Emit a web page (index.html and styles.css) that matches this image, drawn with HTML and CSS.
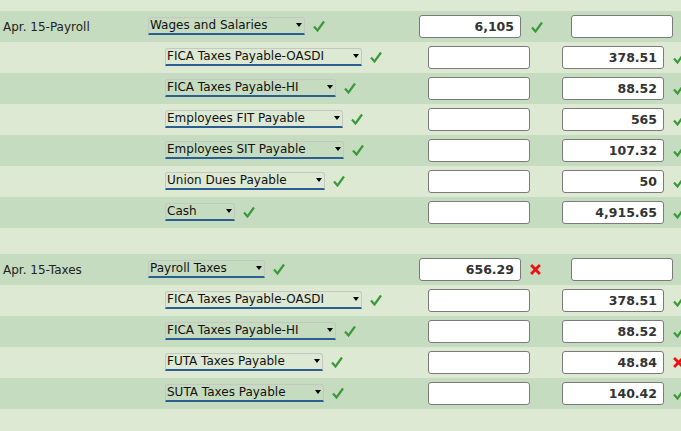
FILE: index.html
```html
<!DOCTYPE html>
<html>
<head>
<meta charset="utf-8">
<link rel="stylesheet" href="styles.css">
</head>
<body>
<div class="journal">
  <div class="row dark">
    <div class="label">Apr. 15-Payroll</div>
    <div class="acct"><span class="select"><span class="opt">Wages and Salaries</span><span class="arrow"></span></span><svg class="ok" viewBox="0 0 12 12"><path d="M1 6.5 L4.5 10.5 L11 1.5"/></svg></div>
    <div class="debit"><input class="amt" value="6,105" readonly><svg class="ok" viewBox="0 0 12 12"><path d="M1 6.5 L4.5 10.5 L11 1.5"/></svg></div>
    <div class="credit main"><input class="amt" value="" readonly></div>
  </div>
  <div class="row light sub">
    <div class="label"></div>
    <div class="acct"><span class="select"><span class="opt">FICA Taxes Payable-OASDI</span><span class="arrow"></span></span><svg class="ok" viewBox="0 0 12 12"><path d="M1 6.5 L4.5 10.5 L11 1.5"/></svg></div>
    <div class="debit"><input class="amt" value="" readonly></div>
    <div class="credit"><input class="amt" value="378.51" readonly><svg class="ok" viewBox="0 0 12 12"><path d="M1 6.5 L4.5 10.5 L11 1.5"/></svg></div>
  </div>
  <div class="row dark sub">
    <div class="label"></div>
    <div class="acct"><span class="select"><span class="opt">FICA Taxes Payable-HI</span><span class="arrow"></span></span><svg class="ok" viewBox="0 0 12 12"><path d="M1 6.5 L4.5 10.5 L11 1.5"/></svg></div>
    <div class="debit"><input class="amt" value="" readonly></div>
    <div class="credit"><input class="amt" value="88.52" readonly><svg class="ok" viewBox="0 0 12 12"><path d="M1 6.5 L4.5 10.5 L11 1.5"/></svg></div>
  </div>
  <div class="row light sub">
    <div class="label"></div>
    <div class="acct"><span class="select"><span class="opt">Employees FIT Payable</span><span class="arrow"></span></span><svg class="ok" viewBox="0 0 12 12"><path d="M1 6.5 L4.5 10.5 L11 1.5"/></svg></div>
    <div class="debit"><input class="amt" value="" readonly></div>
    <div class="credit"><input class="amt" value="565" readonly><svg class="ok" viewBox="0 0 12 12"><path d="M1 6.5 L4.5 10.5 L11 1.5"/></svg></div>
  </div>
  <div class="row dark sub">
    <div class="label"></div>
    <div class="acct"><span class="select"><span class="opt">Employees SIT Payable</span><span class="arrow"></span></span><svg class="ok" viewBox="0 0 12 12"><path d="M1 6.5 L4.5 10.5 L11 1.5"/></svg></div>
    <div class="debit"><input class="amt" value="" readonly></div>
    <div class="credit"><input class="amt" value="107.32" readonly><svg class="ok" viewBox="0 0 12 12"><path d="M1 6.5 L4.5 10.5 L11 1.5"/></svg></div>
  </div>
  <div class="row light sub">
    <div class="label"></div>
    <div class="acct"><span class="select"><span class="opt">Union Dues Payable</span><span class="arrow"></span></span><svg class="ok" viewBox="0 0 12 12"><path d="M1 6.5 L4.5 10.5 L11 1.5"/></svg></div>
    <div class="debit"><input class="amt" value="" readonly></div>
    <div class="credit"><input class="amt" value="50" readonly><svg class="ok" viewBox="0 0 12 12"><path d="M1 6.5 L4.5 10.5 L11 1.5"/></svg></div>
  </div>
  <div class="row dark sub">
    <div class="label"></div>
    <div class="acct"><span class="select"><span class="opt">Cash</span><span class="arrow"></span></span><svg class="ok" viewBox="0 0 12 12"><path d="M1 6.5 L4.5 10.5 L11 1.5"/></svg></div>
    <div class="debit"><input class="amt" value="" readonly></div>
    <div class="credit"><input class="amt" value="4,915.65" readonly><svg class="ok" viewBox="0 0 12 12"><path d="M1 6.5 L4.5 10.5 L11 1.5"/></svg></div>
  </div>
  <div class="spacer"></div>
  <div class="row dark">
    <div class="label">Apr. 15-Taxes</div>
    <div class="acct"><span class="select"><span class="opt">Payroll Taxes</span><span class="arrow"></span></span><svg class="ok" viewBox="0 0 12 12"><path d="M1 6.5 L4.5 10.5 L11 1.5"/></svg></div>
    <div class="debit"><input class="amt" value="656.29" readonly><svg class="bad" viewBox="0 0 10 10"><path d="M1 1 L9 9 M9 1 L1 9"/></svg></div>
    <div class="credit main"><input class="amt" value="" readonly></div>
  </div>
  <div class="row light sub">
    <div class="label"></div>
    <div class="acct"><span class="select"><span class="opt">FICA Taxes Payable-OASDI</span><span class="arrow"></span></span><svg class="ok" viewBox="0 0 12 12"><path d="M1 6.5 L4.5 10.5 L11 1.5"/></svg></div>
    <div class="debit"><input class="amt" value="" readonly></div>
    <div class="credit"><input class="amt" value="378.51" readonly><svg class="ok" viewBox="0 0 12 12"><path d="M1 6.5 L4.5 10.5 L11 1.5"/></svg></div>
  </div>
  <div class="row dark sub">
    <div class="label"></div>
    <div class="acct"><span class="select"><span class="opt">FICA Taxes Payable-HI</span><span class="arrow"></span></span><svg class="ok" viewBox="0 0 12 12"><path d="M1 6.5 L4.5 10.5 L11 1.5"/></svg></div>
    <div class="debit"><input class="amt" value="" readonly></div>
    <div class="credit"><input class="amt" value="88.52" readonly><svg class="ok" viewBox="0 0 12 12"><path d="M1 6.5 L4.5 10.5 L11 1.5"/></svg></div>
  </div>
  <div class="row light sub">
    <div class="label"></div>
    <div class="acct"><span class="select"><span class="opt">FUTA Taxes Payable</span><span class="arrow"></span></span><svg class="ok" viewBox="0 0 12 12"><path d="M1 6.5 L4.5 10.5 L11 1.5"/></svg></div>
    <div class="debit"><input class="amt" value="" readonly></div>
    <div class="credit"><input class="amt" value="48.84" readonly><svg class="bad" viewBox="0 0 10 10"><path d="M1 1 L9 9 M9 1 L1 9"/></svg></div>
  </div>
  <div class="row dark sub">
    <div class="label"></div>
    <div class="acct"><span class="select"><span class="opt">SUTA Taxes Payable</span><span class="arrow"></span></span><svg class="ok" viewBox="0 0 12 12"><path d="M1 6.5 L4.5 10.5 L11 1.5"/></svg></div>
    <div class="debit"><input class="amt" value="" readonly></div>
    <div class="credit"><input class="amt" value="140.42" readonly><svg class="ok" viewBox="0 0 12 12"><path d="M1 6.5 L4.5 10.5 L11 1.5"/></svg></div>
  </div>
</div>
</body>
</html>
```
FILE: styles.css
```css
html, body {
  margin: 0;
  padding: 0;
  overflow: hidden;
  background: #dde9d3;
}
body {
  font-family: "DejaVu Sans", Verdana, sans-serif;
  font-size: 12px;
  color: #222;
}
.journal {
  padding-top: 11px;
  width: 681px;
  overflow: hidden;
}
.row {
  display: flex;
  align-items: center;
  height: 31px;
}
.row.dark { background: #c6dcc0; }
.row.light { background: #dde9d3; }
.spacer { height: 26px; }
.label {
  width: 145px;
  padding-left: 3px;
  flex: none;
  white-space: nowrap;
}
.acct {
  width: 271px;
  flex: none;
  display: flex;
  align-items: center;
  position: relative;
  top: -1px;
}
.sub .acct { width: 254px; padding-left: 17px; }
.select {
  display: inline-flex;
  align-items: center;
  height: 15px;
  padding-left: 1px;
  border: 1px solid #c4c7c2;
  border-bottom: 2px solid #2a5f90;
  border-radius: 3px 3px 0 0;
  color: #111;
  white-space: nowrap;
  line-height: 15px;
}
.arrow {
  width: 0;
  height: 0;
  margin-left: 29px;
  margin-right: 2px;
  border-left: 3px solid transparent;
  border-right: 3px solid transparent;
  border-top: 4px solid #000;
}
.ok {
  width: 12px;
  height: 12px;
  margin-left: 8px;
  flex: none;
}
.ok path {
  fill: none;
  stroke: #3a9a3a;
  stroke-width: 2.2;
}
.bad {
  width: 11px;
  height: 11px;
  margin-left: 9px;
  flex: none;
}
.bad path {
  fill: none;
  stroke: #ee1111;
  stroke-width: 2.6;
}
.debit {
  width: 143px;
  flex: none;
  display: flex;
  align-items: center;
}
.sub .debit { width: 134px; padding-left: 9px; }
.debit .ok { margin-left: 10px; }
.credit {
  flex: none;
  display: flex;
  align-items: center;
}
.credit.main { padding-left: 9px; }
.credit .ok { margin-left: 9px; }
.amt {
  box-sizing: border-box;
  width: 102px;
  height: 23px;
  margin: 0;
  padding: 0 6px 0 4px;
  border: 1px solid #7b7b7b;
  border-radius: 3px;
  background: #fff;
  font-family: "DejaVu Sans", Verdana, sans-serif;
  font-size: 12.5px;
  font-weight: bold;
  color: #333;
  text-align: right;
  outline: none;
}
```
